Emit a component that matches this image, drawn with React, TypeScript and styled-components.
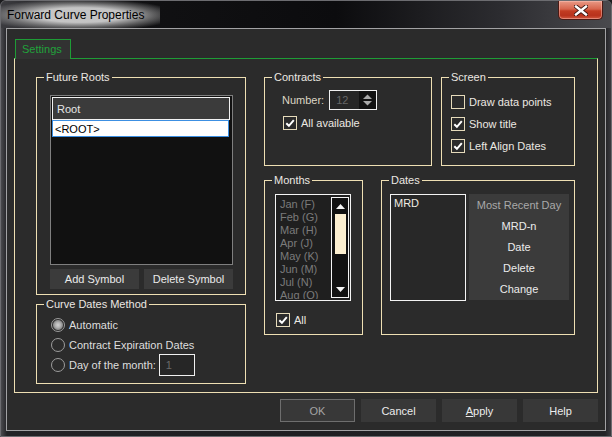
import { createGlobalStyle, styled } from "styled-components";

const GlobalStyle = createGlobalStyle`
  html, body {
    margin: 0;
    padding: 0;
    background: #1c1c1e;
  }
  body {
    font-family: "Liberation Sans", Arial, sans-serif;
    font-size: 11px;
    color: #e8e6e1;
  }
`;

const Window = styled.div`
  width: 612px;
  height: 437px;
  box-sizing: border-box;
  display: flex;
  flex-direction: column;
  border: 1px solid #6c6c70;
  border-radius: 6px 6px 0 0;
  overflow: hidden;
  background: linear-gradient(90deg, #4a4a4e 0, #222225 6px, #1f1f22 50%, #222225 calc(100% - 6px), #3a3a3e 100%);
`;

const TitleBar = styled.div`
  height: 27px;
  flex: none;
  display: flex;
  justify-content: space-between;
  align-items: flex-start;
  background: linear-gradient(90deg, #3c3c40 0, #121214 14%, #0c0c0e 55%, #2c2c30 82%, #4a4a4e 100%);
`;

const TitleText = styled.div`
  height: 27px;
  display: flex;
  align-items: center;
  padding: 0 16px 0 6px;
  font-size: 12px;
  color: #000;
  background: radial-gradient(ellipse 62% 60% at 50% 52%, rgba(206, 206, 206, 0.95) 45%, rgba(170, 170, 170, 0.5) 75%, rgba(120, 120, 120, 0) 100%);
`;

const CloseButton = styled.div`
  width: 45px;
  height: 19px;
  margin-right: 8px;
  display: flex;
  align-items: center;
  justify-content: center;
  box-sizing: border-box;
  border: 1px solid #4a1a14;
  border-top: none;
  border-radius: 0 0 5px 5px;
  background: linear-gradient(180deg, #e99a86 0, #d7644c 45%, #c23c22 55%, #b8321c 80%, #d0583e 100%);
  box-shadow: inset 0 0 0 1px rgba(255, 200, 190, 0.45);
`;

const Client = styled.div`
  flex: 1;
  margin: 0 5px 5px 5px;
  border: 1px solid #a2a2a4;
  background: #2b2b2b;
  padding: 10px 7px 8px 7px;
  display: flex;
  flex-direction: column;
`;

const TabStrip = styled.div`
  display: flex;
  height: 19px;
  padding-left: 1px;
`;

const Tab = styled.div`
  width: 56px;
  height: 20px;
  box-sizing: border-box;
  border: 1px solid #1e9c36;
  border-bottom: none;
  background: #323232;
  color: #21a23b;
  padding: 3px 0 0 6px;
  position: relative;
  z-index: 1;
`;

const TabPanel = styled.div`
  height: 335px;
  box-sizing: border-box;
  border: 1px solid #eedfb3;
  border-top-color: #1e9c36;
  padding: 18px 0 0 21px;
  display: flex;
  gap: 18px;
`;

const Column = styled.div`
  display: flex;
  flex-direction: column;
`;

const Row = styled.div<{ $gap: number; $top?: number }>`
  display: flex;
  gap: ${(p) => p.$gap}px;
  margin-top: ${(p) => p.$top ?? 0}px;
`;

const Group = styled.div<{ $w: number; $h: number; $pad: string; $top?: number }>`
  position: relative;
  width: ${(p) => p.$w}px;
  height: ${(p) => p.$h}px;
  box-sizing: border-box;
  border: 1px solid #eedfb3;
  padding: ${(p) => p.$pad};
  margin-top: ${(p) => p.$top ?? 0}px;
  display: flex;
  flex-direction: column;
`;

const Caption = styled.span`
  position: absolute;
  top: -7px;
  left: 7px;
  padding: 0 2px;
  line-height: 13px;
  background: #2b2b2b;
  color: #ebe8e2;
  white-space: nowrap;
`;

const RootList = styled.div`
  width: 183px;
  height: 170px;
  box-sizing: border-box;
  border: 1px solid #7f7f7f;
  background: #111;
  padding: 1px 2px 1px 1px;
`;

const ListHeader = styled.div`
  height: 23px;
  box-sizing: border-box;
  border: 1px solid #f2f2f2;
  background: #3b3b3b;
  color: #e6e6e6;
  display: flex;
  align-items: center;
  padding-left: 4px;
`;

const ListRow = styled.div`
  height: 17px;
  width: 177px;
  box-sizing: border-box;
  border: 1px solid #3c8fe2;
  background: #fff;
  color: #000;
  display: flex;
  align-items: center;
  padding-left: 2px;
`;

const SmallButton = styled.div<{ $w: number }>`
  width: ${(p) => p.$w}px;
  height: 20px;
  background: #3b3b3b;
  color: #ebebeb;
  display: flex;
  align-items: center;
  justify-content: center;
`;

const OptionRow = styled.div<{ $h: number }>`
  height: ${(p) => p.$h}px;
  display: flex;
  align-items: center;
  gap: 4px;
  color: #dedede;
`;

const Radio = styled.span<{ $checked?: boolean }>`
  width: 14px;
  height: 14px;
  box-sizing: border-box;
  border-radius: 50%;
  border: 1px solid #9c9c9c;
  flex: none;
  background: ${(p) =>
    p.$checked
      ? "radial-gradient(circle, #d2d2d2 0, #b4b4b4 2.5px, #8c8c8c 4.5px, #2b2b2b 5.5px)"
      : "#2b2b2b"};
`;

const FieldBox = styled.div<{ $w: number }>`
  width: ${(p) => p.$w}px;
  height: 22px;
  box-sizing: border-box;
  border: 1px solid #f0f0f0;
  background: #262626;
  color: #6a6a6a;
  display: flex;
  align-items: center;
  padding-left: 6px;
  margin-left: -1px;
`;

const Spin = styled.div`
  width: 48px;
  height: 20px;
  box-sizing: border-box;
  border: 1px solid #f0f0f0;
  display: flex;
  margin-left: 5px;
`;

const SpinValue = styled.div`
  flex: 1;
  background: #262626;
  color: #666;
  display: flex;
  align-items: center;
  padding-left: 6px;
`;

const SpinButtons = styled.div`
  width: 17px;
  background: #111;
  display: flex;
  align-items: center;
  justify-content: center;
`;

const Check = styled.span`
  width: 14px;
  height: 14px;
  box-sizing: border-box;
  border: 1px solid #e6dbbb;
  background: #2b2b2b;
  display: flex;
  align-items: center;
  justify-content: center;
  flex: none;
`;

const CheckRow = styled.div<{ $top?: number; $left?: number }>`
  display: flex;
  align-items: center;
  gap: 4px;
  height: 14px;
  margin-top: ${(p) => p.$top ?? 0}px;
  margin-left: ${(p) => p.$left ?? 0}px;
  color: #ebe8e2;
`;

const NumberRow = styled.div`
  display: flex;
  align-items: center;
  color: #ddd6c4;
`;

const MonthList = styled.div`
  width: 76px;
  height: 107px;
  box-sizing: border-box;
  border: 1px solid #f4f4f4;
  background: #1f1f1f;
  display: flex;
  padding: 1px;
`;

const MonthItems = styled.div`
  flex: 1;
  overflow: hidden;
  padding: 2px 0 0 3px;
  color: #7b7b7b;
  line-height: 13px;
`;

const ScrollBar = styled.div`
  width: 18px;
  box-sizing: border-box;
  border: 1px solid #f4f4f4;
  background: #111;
  display: flex;
  flex-direction: column;
  align-items: center;
  padding: 6px 0 5px;
  margin: 1px 0;
`;

const Thumb = styled.div`
  width: 11px;
  height: 40px;
  background: #fcefd0;
  margin-top: 5px;
  margin-bottom: auto;
`;

const DatesBody = styled.div`
  display: flex;
  gap: 3px;
`;

const DatesList = styled.div`
  width: 76px;
  height: 107px;
  box-sizing: border-box;
  border: 1px solid #f4f4f4;
  background: #282828;
  padding: 2px 0 0 3px;
  color: #f0ece2;
  line-height: 13px;
`;

const ActionPanel = styled.div`
  width: 100px;
  height: 106px;
  background: #3b3b3b;
  display: flex;
  flex-direction: column;
`;

const Action = styled.div<{ $disabled?: boolean }>`
  height: 21px;
  display: flex;
  align-items: center;
  justify-content: center;
  color: ${(p) => (p.$disabled ? "#a9a9a9" : "#ececec")};
`;

const ButtonBar = styled.div`
  display: flex;
  justify-content: flex-end;
  gap: 6px;
  margin-top: 6px;
`;

const DialogButton = styled.div<{ $default?: boolean }>`
  width: 75px;
  height: 23px;
  box-sizing: border-box;
  background: #383838;
  border: 1px solid ${(p) => (p.$default ? "#6e6e6e" : "#383838")};
  color: ${(p) => (p.$default ? "#a4a4a4" : "#ececec")};
  display: flex;
  align-items: center;
  justify-content: center;
`;

const Mnemonic = styled.span`
  text-decoration: underline;
`;

const CheckMark = () => (
  <svg width="10" height="10" viewBox="0 0 10 10">
    <path d="M1.3 5.3 L3.9 7.8 L8.8 2.2" fill="none" stroke="#fff" strokeWidth="2" />
  </svg>
);

const CloseGlyph = () => (
  <svg width="14" height="11" viewBox="0 0 14 11">
    <path d="M2 1.5 L12 9.5 M12 1.5 L2 9.5" stroke="#3a1510" strokeWidth="4.2" strokeLinecap="square" />
    <path d="M2 1.5 L12 9.5 M12 1.5 L2 9.5" stroke="#fff" strokeWidth="2.4" strokeLinecap="square" />
  </svg>
);

const Arrow = ({ up, color, w = 9 }: { up: boolean; color: string; w?: number }) => (
  <svg width={w} height="5" viewBox="0 0 9 5">
    <path d={up ? "M0 5 L4.5 0 L9 5 Z" : "M0 0 L9 0 L4.5 5 Z"} fill={color} />
  </svg>
);

const months = ["Jan (F)", "Feb (G)", "Mar (H)", "Apr (J)", "May (K)", "Jun (M)", "Jul (N)", "Aug (Q)"];

export default function App() {
  return (
    <>
      <GlobalStyle />
      <Window>
        <TitleBar>
          <TitleText>Forward Curve Properties</TitleText>
          <CloseButton>
            <CloseGlyph />
          </CloseButton>
        </TitleBar>
        <Client>
          <TabStrip>
            <Tab>Settings</Tab>
          </TabStrip>
          <TabPanel>
            <Column>
              <Group $w={210} $h={218} $pad="17px 0 0 13px">
                <Caption>Future Roots</Caption>
                <RootList>
                  <ListHeader>Root</ListHeader>
                  <ListRow>&lt;ROOT&gt;</ListRow>
                </RootList>
                <Row $gap={5} $top={4}>
                  <SmallButton $w={89}>Add Symbol</SmallButton>
                  <SmallButton $w={89}>Delete Symbol</SmallButton>
                </Row>
              </Group>
              <Group $w={210} $h={80} $pad="10px 0 0 14px" $top={9}>
                <Caption>Curve Dates Method</Caption>
                <OptionRow $h={20}>
                  <Radio $checked />
                  Automatic
                </OptionRow>
                <OptionRow $h={19}>
                  <Radio />
                  Contract Expiration Dates
                </OptionRow>
                <OptionRow $h={22}>
                  <Radio />
                  Day of the month:
                  <FieldBox $w={36}>1</FieldBox>
                </OptionRow>
              </Group>
            </Column>
            <Column>
              <Row $gap={9}>
                <Group $w={168} $h={89} $pad="12px 0 0 17px">
                  <Caption>Contracts</Caption>
                  <NumberRow>
                    Number:
                    <Spin>
                      <SpinValue>12</SpinValue>
                      <SpinButtons>
                        <svg width="11" height="12" viewBox="0 0 11 12">
                          <path d="M1 5 L5.5 0.5 L10 5 Z" fill="#a8a8a8" />
                          <path d="M1 7 L10 7 L5.5 11.5 Z" fill="#a8a8a8" />
                        </svg>
                      </SpinButtons>
                    </Spin>
                  </NumberRow>
                  <CheckRow $top={6} $left={1}>
                    <Check>
                      <CheckMark />
                    </Check>
                    All available
                  </CheckRow>
                </Group>
                <Group $w={134} $h={89} $pad="17px 0 0 9px">
                  <Caption>Screen</Caption>
                  <CheckRow>
                    <Check />
                    Draw data points
                  </CheckRow>
                  <CheckRow $top={8}>
                    <Check>
                      <CheckMark />
                    </Check>
                    Show title
                  </CheckRow>
                  <CheckRow $top={8}>
                    <Check>
                      <CheckMark />
                    </Check>
                    Left Align Dates
                  </CheckRow>
                </Group>
              </Row>
              <Row $gap={18} $top={14}>
                <Group $w={99} $h={155} $pad="13px 0 0 10px">
                  <Caption>Months</Caption>
                  <MonthList>
                    <MonthItems>
                      {months.map((m) => (
                        <div key={m}>{m}</div>
                      ))}
                    </MonthItems>
                    <ScrollBar>
                      <Arrow up color="#f4f4f4" />
                      <Thumb />
                      <Arrow up={false} color="#f4f4f4" />
                    </ScrollBar>
                  </MonthList>
                  <CheckRow $top={12} $left={1}>
                    <Check>
                      <CheckMark />
                    </Check>
                    All
                  </CheckRow>
                </Group>
                <Group $w={194} $h={155} $pad="13px 0 0 8px">
                  <Caption>Dates</Caption>
                  <DatesBody>
                    <DatesList>MRD</DatesList>
                    <ActionPanel>
                      <Action $disabled>Most Recent Day</Action>
                      <Action>MRD-n</Action>
                      <Action>Date</Action>
                      <Action>Delete</Action>
                      <Action>Change</Action>
                    </ActionPanel>
                  </DatesBody>
                </Group>
              </Row>
            </Column>
          </TabPanel>
          <ButtonBar>
            <DialogButton $default>OK</DialogButton>
            <DialogButton>Cancel</DialogButton>
            <DialogButton>
              <Mnemonic>A</Mnemonic>pply
            </DialogButton>
            <DialogButton>Help</DialogButton>
          </ButtonBar>
        </Client>
      </Window>
    </>
  );
}
